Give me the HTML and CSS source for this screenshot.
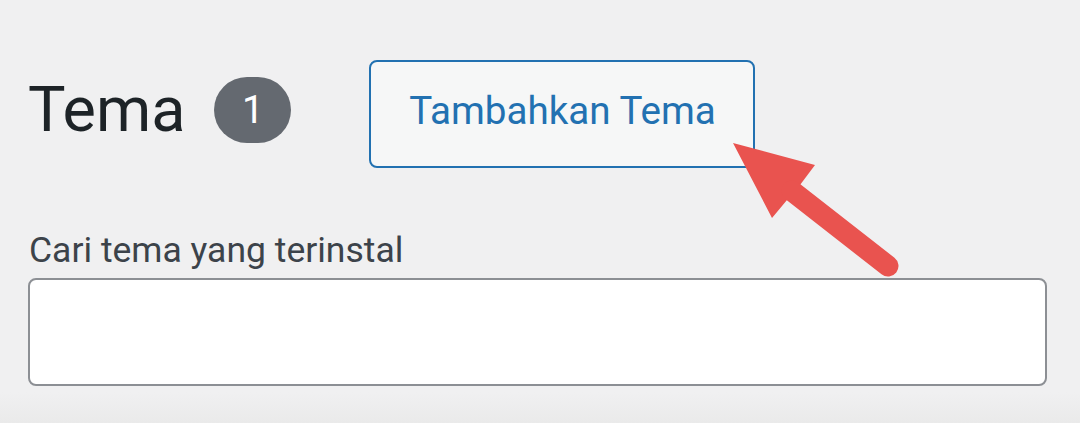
FILE: index.html
```html
<!DOCTYPE html>
<html lang="id">
<head>
<meta charset="utf-8">
<title>Tema</title>
<link rel="stylesheet" href="styles.css">
</head>
<body>
<div class="page">
  <div class="header">
    <h1 class="title">Tema</h1>
    <span class="count">1</span>
    <a class="add-btn" href="#">Tambahkan Tema</a>
  </div>
  <div class="search">
    <label class="search-label" for="s">Cari tema yang terinstal</label>
    <input class="search-input" id="s" type="search">
  </div>
  <svg class="arrow" width="1080" height="423" viewBox="0 0 1080 423" aria-hidden="true">
    <polygon points="733,143 815,165 800,185 787,200 772,218" fill="#e9534f"/>
    <line x1="792" y1="191" x2="888" y2="266" stroke="#e9534f" stroke-width="21" stroke-linecap="round"/>
  </svg>
</div>
</body>
</html>
```
FILE: styles.css
```css
html, body {
  margin: 0;
  padding: 0;
}
body {
  width: 1080px;
  height: 423px;
  overflow: hidden;
  background: linear-gradient(to bottom, #f0f0f1 0, #f0f0f1 392px, #eaeaea 423px);
  font-family: Roboto, "Noto Sans", "Liberation Sans", sans-serif;
}
.page {
  position: relative;
  height: 423px;
}
.header {
  display: flex;
  align-items: center;
  padding: 60px 0 0 28px;
  height: 108px;
}
.title {
  margin: 0 0 9px 0;
  font-size: 63px;
  line-height: 66px;
  font-weight: 400;
  color: #1d2327;
}
.count {
  margin: 0 0 8px 29px;
  width: 77px;
  height: 66px;
  border-radius: 33px;
  background: #646970;
  color: #fff;
  font-size: 39px;
  display: flex;
  align-items: center;
  justify-content: center;
}
.add-btn {
  margin-left: 78px;
  box-sizing: border-box;
  width: 386px;
  height: 108px;
  border: 2px solid #2271b1;
  border-radius: 8px;
  background: #f6f7f7;
  color: #2271b1;
  font-size: 38.6px;
  text-decoration: none;
  display: flex;
  align-items: center;
  justify-content: center;
  padding-bottom: 8px;
}
.search {
  display: flex;
  flex-direction: column;
  padding: 61px 0 0 28px;
}
.search-label {
  font-size: 35.5px;
  line-height: 43px;
  color: #3c434a;
  margin-left: 1px;
}
.search-input {
  margin-top: 6px;
  box-sizing: border-box;
  width: 1019px;
  height: 108px;
  border: 2px solid #8c8f94;
  border-radius: 8px;
  background: #fff;
  padding: 0 16px;
  font-size: 36px;
  font-family: inherit;
  outline: none;
}
.arrow {
  position: absolute;
  top: 0;
  left: 0;
  pointer-events: none;
}
```
